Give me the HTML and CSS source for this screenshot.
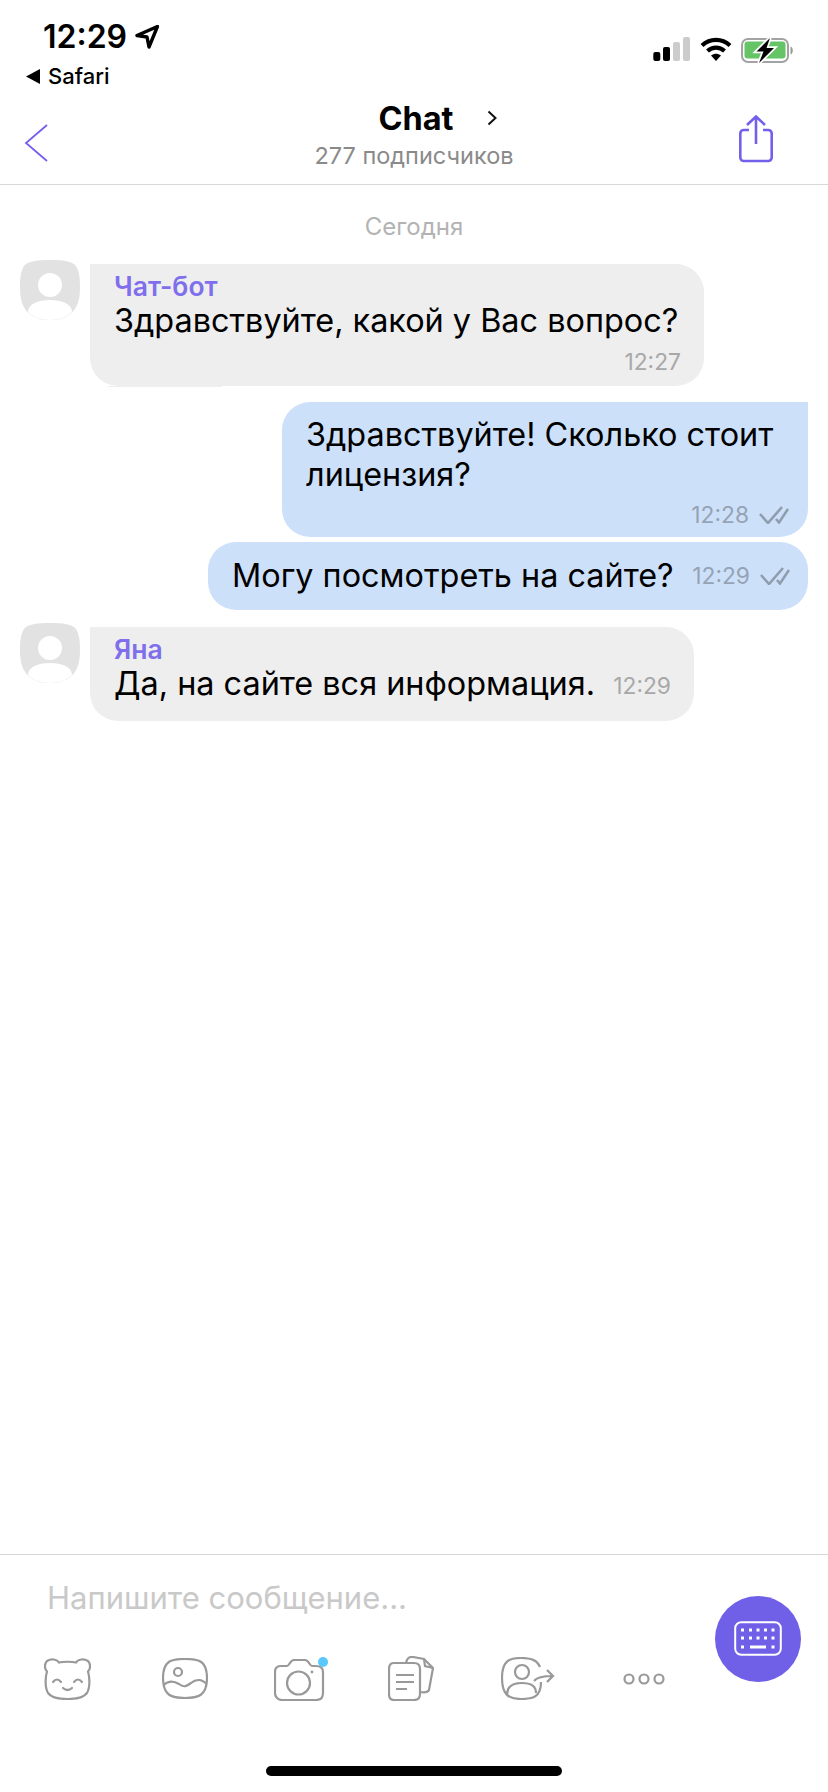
FILE: index.html
```html
<!DOCTYPE html>
<html lang="ru">
<head>
    <meta charset="UTF-8">
    <meta name="viewport" content="width=device-width, initial-scale=1.0">
    <title>Chat</title>
    <link rel="stylesheet" href="styles.css">
</head>
<body>
<div class="status_bar">
    <div class="status_left">
        <div class="clock">12:29
            <svg class="location" width="24" height="24" viewBox="0 0 24 24"><path d="M22.500 1.500L2 10.500l10 1.500 2 10z" fill="none" stroke="#000" stroke-width="3.400" stroke-linejoin="round"/></svg>
        </div>
        <div class="back_app">
            <svg width="14" height="15" viewBox="0 0 14 15"><path d="M14 0v15L0 7.500z" fill="#000"/></svg>
            Safari
        </div>
    </div>
    <div class="status_right">
        <svg width="38" height="24" viewBox="0 0 38 24">
            <rect x="0.300" y="15" width="7" height="9" rx="2" fill="#000"/>
            <rect x="10" y="10" width="7" height="14" rx="2" fill="#000"/>
            <rect x="20" y="5" width="7" height="19" rx="2" fill="#ccc"/>
            <rect x="30" y="0" width="7" height="24" rx="2" fill="#ccc"/>
        </svg>
        <svg width="32" height="25" viewBox="0 0 32 25">
            <path d="M2 8.500C10 1 22 1 30 8.500" fill="none" stroke="#000" stroke-width="4.200"/>
            <path d="M7.500 14C12.500 9.500 19.500 9.500 24.500 14" fill="none" stroke="#000" stroke-width="4.200"/>
            <path d="M11 18.500C14.500 16 17.500 16 21 18.500L16 24z" fill="#000"/>
        </svg>
        <svg width="54" height="27" viewBox="0 0 54 27">
            <rect x="1" y="2" width="46" height="23" rx="6" fill="none" stroke="#a3a3a3" stroke-width="2"/>
            <rect x="3.500" y="4.500" width="41" height="17" rx="3" fill="#65c466"/>
            <path d="M49.500 9.500c3 .5 3 7.500 0 8z" fill="#999"/>
            <path class="bolt" d="M29 1L15.500 14.500H22.500L18 26L33 11H25.500z"/>
        </svg>
    </div>
</div>

<div class="top_bar">
    <svg class="back_arrow" width="24" height="38" viewBox="0 0 24 38"><path d="M23 1L2 19l21 18" fill="none" stroke="#7360ea" stroke-width="1.800"/></svg>
    <div class="title_box">
        <div class="title">Chat
            <svg class="title_chevron" width="10" height="16" viewBox="0 0 10 16"><path d="M1.500 1.500L8.500 8l-7 6.500" fill="none" stroke="#111" stroke-width="2"/></svg>
        </div>
        <div class="subscribers">277 подписчиков</div>
    </div>
    <svg class="share" width="36" height="48" viewBox="0 0 36 48">
        <path d="M11 15H5.800a3.500 3.500 0 0 0-3.500 3.500v24a3.500 3.500 0 0 0 3.500 3.500h24.400a3.500 3.500 0 0 0 3.500-3.500v-24a3.500 3.500 0 0 0-3.500-3.500H25" fill="none" stroke="#7360ea" stroke-width="2.600"/>
        <path d="M18 29V2M9 10l9-8.500L27 10" fill="none" stroke="#7360ea" stroke-width="2.600"/>
    </svg>
</div>

<div class="chat">
    <div class="date_label">Сегодня</div>

    <div class="row row_first">
        <svg class="avatar" width="60" height="60" viewBox="0 0 60 60">
            <path d="M30 0C43 0 52 1 56 6C60 12 60 22 60 28C60 40 57 49 50 54C44 59 37 60 30 60C23 60 16 59 10 54C3 49 0 40 0 28C0 22 0 12 4 6C8 1 17 0 30 0z" fill="#e2e2e2"/>
            <circle cx="30" cy="25" r="12" fill="#fff"/>
            <path d="M8 52C8 44 18 40 30 40C42 40 52 44 52 52C47 57 39 60 30 60C21 60 13 57 8 52z" fill="#fff"/>
        </svg>
        <div class="bubble incoming bubble_tall">
            <div class="sender">Чат-бот</div>
            <div class="text">Здравствуйте, какой у Вас вопрос?</div>
            <div class="meta meta_below"><span class="time">12:27</span></div>
        </div>
    </div>

    <div class="row row_out row_second">
        <div class="bubble outgoing corner_tr">
            <div class="text text_wrap">Здравствуйте! Сколько стоит лицензия?</div>
            <div class="meta meta_below">
                <span class="time time_out">12:28</span>
                <svg class="ticks" width="30" height="18" viewBox="0 0 30 18"><path d="M1 8l8 9L23 1M17 13l3 3.500L29 3" fill="none" stroke="#8f9dad" stroke-width="2.600"/></svg>
            </div>
        </div>
    </div>

    <div class="row row_out row_third">
        <div class="bubble outgoing bubble_line">
            <div class="text">Могу посмотреть на сайте?</div>
            <div class="meta">
                <span class="time time_out">12:29</span>
                <svg class="ticks" width="30" height="18" viewBox="0 0 30 18"><path d="M1 8l8 9L23 1M17 13l3 3.500L29 3" fill="none" stroke="#8f9dad" stroke-width="2.600"/></svg>
            </div>
        </div>
    </div>

    <div class="row row_last">
        <svg class="avatar" width="60" height="60" viewBox="0 0 60 60">
            <path d="M30 0C43 0 52 1 56 6C60 12 60 22 60 28C60 40 57 49 50 54C44 59 37 60 30 60C23 60 16 59 10 54C3 49 0 40 0 28C0 22 0 12 4 6C8 1 17 0 30 0z" fill="#e2e2e2"/>
            <circle cx="30" cy="25" r="12" fill="#fff"/>
            <path d="M8 52C8 44 18 40 30 40C42 40 52 44 52 52C47 57 39 60 30 60C21 60 13 57 8 52z" fill="#fff"/>
        </svg>
        <div class="bubble incoming bubble_short">
            <div class="sender">Яна</div>
            <div class="line_with_time">
                <div class="text">Да, на сайте вся информация.</div>
                <div class="meta"><span class="time">12:29</span></div>
            </div>
        </div>
    </div>
</div>

<div class="composer">
    <div class="placeholder">Напишите сообщение...</div>
    <div class="tools">
        <svg width="47" height="42" viewBox="0 0 47 42" fill="none" stroke="#999" stroke-width="2.200" stroke-linecap="round">
            <path d="M15 4.500C19 3.500 28 3.500 32 4.500C34 1 40 .5 44 3C47 6 46.500 11 44 13.500C46 20 46 30 43 35C39 40.500 30 41 23.500 41C17 41 8 40.500 4 35C1 30 1 20 3 13.500C.5 11 0 6 3 3C7 .5 13 1 15 4.500z"/>
            <path d="M9 24q4-5 8 0M30 24q4-5 8 0M19 30q4.500 4 9 0"/>
        </svg>
        <svg class="tool_image" width="46" height="41" viewBox="0 0 46 41" fill="none" stroke="#999" stroke-width="2.200">
            <path d="M23 1C36 1 45 2 45 20C45 38 36 40 23 40C10 40 1 38 1 20C1 2 10 1 23 1z"/>
            <circle cx="16" cy="14" r="4"/>
            <path d="M1.500 27C6 23 12 23 17 26C22 30 25 28 29 25C34 21 40 21 44.500 26"/>
        </svg>
        <svg class="tool_camera" width="54" height="44" viewBox="0 0 54 44" fill="none" stroke="#999" stroke-width="2.200">
            <path d="M7 9H13C15.500 9 16 3 20 3H31C35 3 35.500 9 38 9H42C46 9 49 11 49 15V36C49 40 47 43 42 43H8C4 43 1 40 1 36V15C1 11 3 9 7 9z"/>
            <circle cx="24.500" cy="26" r="11.500"/>
            <circle cx="38" cy="15" r="1.400" fill="#999" stroke="none"/>
            <circle cx="49" cy="5" r="5" fill="#5ac8fa" stroke="none"/>
        </svg>
        <svg class="tool_docs" width="46" height="45" viewBox="0 0 46 45" fill="none" stroke="#999" stroke-width="2.200">
            <path d="M6 7H26C30 7 32 9 32 13V38C32 42 30 44 26 44H6C3 44 1 42 1 38V13C1 9 3 7 6 7z"/>
            <path d="M18 7C19 2 21 .5 25 1L36 3L45 12L41 34C40 36 38 37 32 36"/>
            <path d="M36 3L37 10L45 12"/>
            <path d="M8 19H26M8 26H26M8 33H19"/>
        </svg>
        <svg class="tool_contact" width="54" height="43" viewBox="0 0 54 43" fill="none" stroke="#999" stroke-width="2.200">
            <path d="M40 25C40 40 32 42 20 42C8 42 1 38 1 21C1 4 8 1 20 1C30 1 36 3 39 10"/>
            <circle cx="21" cy="15" r="7"/>
            <path d="M6 38C6 29 12 26 21 26C30 26 35 29 35 36"/>
            <path d="M33 24C36 20 42 19 52 19M46 13L52 19L46 25"/>
        </svg>
        <svg class="tool_more" width="42" height="12" viewBox="0 0 42 12" fill="none" stroke="#999" stroke-width="2.200">
            <circle cx="6" cy="6" r="4.500"/>
            <circle cx="21" cy="6" r="4.500"/>
            <circle cx="36" cy="6" r="4.500"/>
        </svg>
    </div>
    <div class="home_bar"></div>
    <div class="fab">
        <svg width="48" height="36" viewBox="0 0 48 36" fill="none" stroke="#fff">
            <rect x="1.200" y="1.200" width="45.600" height="32.600" rx="6" stroke-width="2"/>
            <path d="M7 9h3M15 9h3M22.500 9h3M30 9h3M37.500 9h3M7 17h3M15 17h3M22.500 17h3M30 17h3M37.500 17h3M7 26h3M16 26h16M37.500 26h3" stroke-width="3"/>
        </svg>
    </div>
</div>
</body>
</html>
```

FILE: styles.css
```css
html, body{
    margin: 0px;
    height: 100%;
}
body{
    width: 828px;
    height: 1792px;
    display: flex;
    flex-direction: column;
    background: #fff;
    font-family: Inter, "Liberation Sans", sans-serif;
    color: #000;
    overflow: hidden;
}
svg{
    display: block;
    flex: none;
}
.status_bar{
    height: 92px;
    display: flex;
    justify-content: space-between;
    flex: none;
}
.status_left{
    padding-left: 26px;
    padding-top: 19px;
}
.clock{
    display: flex;
    align-items: center;
    gap: 8px;
    padding-left: 17px;
    font-size: 32px;
    font-weight: 600;
    line-height: 36px;
}
.back_app{
    display: flex;
    align-items: center;
    gap: 8px;
    margin-top: 9px;
    font-size: 22px;
    font-weight: 500;
    line-height: 24px;
}
.status_right{
    display: flex;
    align-items: flex-start;
    gap: 9px;
    padding: 37px 33px 0 0;
}
.bolt{
    fill: #000;
    stroke: #fff;
    stroke-width: 3.500px;
    paint-order: stroke;
}
.top_bar{
    height: 92px;
    display: grid;
    grid-template-columns: 1fr auto 1fr;
    align-items: start;
    border-bottom: 1px solid #d8d8d8;
    flex: none;
}
.back_arrow{
    margin: 32px 0 0 24px;
}
.title_box{
    text-align: center;
}
.title{
    display: flex;
    justify-content: center;
    align-items: center;
    gap: 33px;
    height: 40px;
    margin-top: 6px;
    padding-left: 47px;
    font-size: 32.500px;
    font-weight: 700;
}
.subscribers{
    margin-top: 4px;
    font-size: 23.500px;
    line-height: 28px;
    color: #8a8a8a;
}
.share{
    justify-self: end;
    margin: 23px 54px 0 0;
}
.chat{
    flex: 1;
}
.date_label{
    padding-top: 28px;
    text-align: center;
    font-size: 24px;
    line-height: 28px;
    color: #b3b3b3;
}
.row{
    display: flex;
    align-items: flex-start;
    gap: 10px;
    padding-left: 20px;
}
.row_first{
    margin-top: 19px;
}
.row_second{
    margin-top: 16px;
}
.row_third{
    margin-top: 5px;
}
.row_last{
    margin-top: 13px;
}
.row_out{
    justify-content: flex-end;
    padding-left: 0;
    padding-right: 20px;
}
.bubble{
    box-sizing: border-box;
    border-radius: 28px;
    padding: 0 24px;
}
.incoming{
    margin-top: 4px;
    background: #eee;
    border-top-left-radius: 0;
}
.outgoing{
    background: #cde0fa;
}
.corner_tr{
    width: 526px;
    height: 135px;
    padding-top: 13px;
    border-top-right-radius: 0;
}
.bubble_tall{
    width: 614px;
    height: 122px;
    padding-top: 8px;
    position: relative;
}
/* little sliver under the first bubble, it is in the screenshot too */
.bubble_tall::after{
    content: "";
    position: absolute;
    left: 18px;
    bottom: -1px;
    width: 114px;
    height: 1px;
    background: #eee;
}
.bubble_line{
    width: 600px;
    height: 68px;
    display: flex;
    align-items: center;
    justify-content: space-between;
    padding-right: 18px;
}
.bubble_short{
    width: 604px;
    height: 94px;
    padding-top: 8px;
    padding-right: 24px;
}
.line_with_time{
    display: flex;
    justify-content: space-between;
    align-items: center;
}
.line_with_time .meta{
    padding-top: 3px;
    margin-right: -1px;
}
.sender{
    font-size: 26.500px;
    font-weight: 600;
    line-height: 29px;
    color: #7f6fec;
}
.text{
    font-size: 32.400px;
    line-height: 40px;
}
.meta{
    display: flex;
    align-items: center;
    gap: 10px;
}
.meta_below{
    justify-content: flex-end;
}
.corner_tr .meta_below{
    padding-top: 7px;
    margin-right: -5px;
}
.bubble_tall .meta_below{
    padding-top: 8px;
    margin-right: -1px;
}
.time{
    font-size: 22.800px;
    line-height: 26px;
    color: #a8a8a8;
}
.time_out{
    color: #95a3b4;
}
.composer{
    height: 238px;
    box-sizing: border-box;
    border-top: 1px solid #d8d8d8;
    position: relative;
    flex: none;
}
.placeholder{
    padding: 25px 0 0 47px;
    font-size: 31px;
    line-height: 36px;
    color: #c9c9c9;
}
.tools{
    display: flex;
    align-items: center;
    gap: 67px;
    margin-top: 40px;
    padding-left: 44px;
}
.tool_image{
    margin-left: 4px;
}
.tool_camera{
    margin-left: -1px;
    margin-right: -7px;
}
.tool_more{
    margin-left: 1px;
}
.home_bar{
    width: 296px;
    height: 10px;
    margin: 65px 0 0 266px;
    border-radius: 5px;
    background: #000;
}
/* floating keyboard button sits over the toolbar */
.fab{
    position: absolute;
    left: 715px;
    top: 41px;
    width: 86px;
    height: 86px;
    border-radius: 50%;
    background: #7060e8;
    display: flex;
    align-items: center;
    justify-content: center;
}
```
